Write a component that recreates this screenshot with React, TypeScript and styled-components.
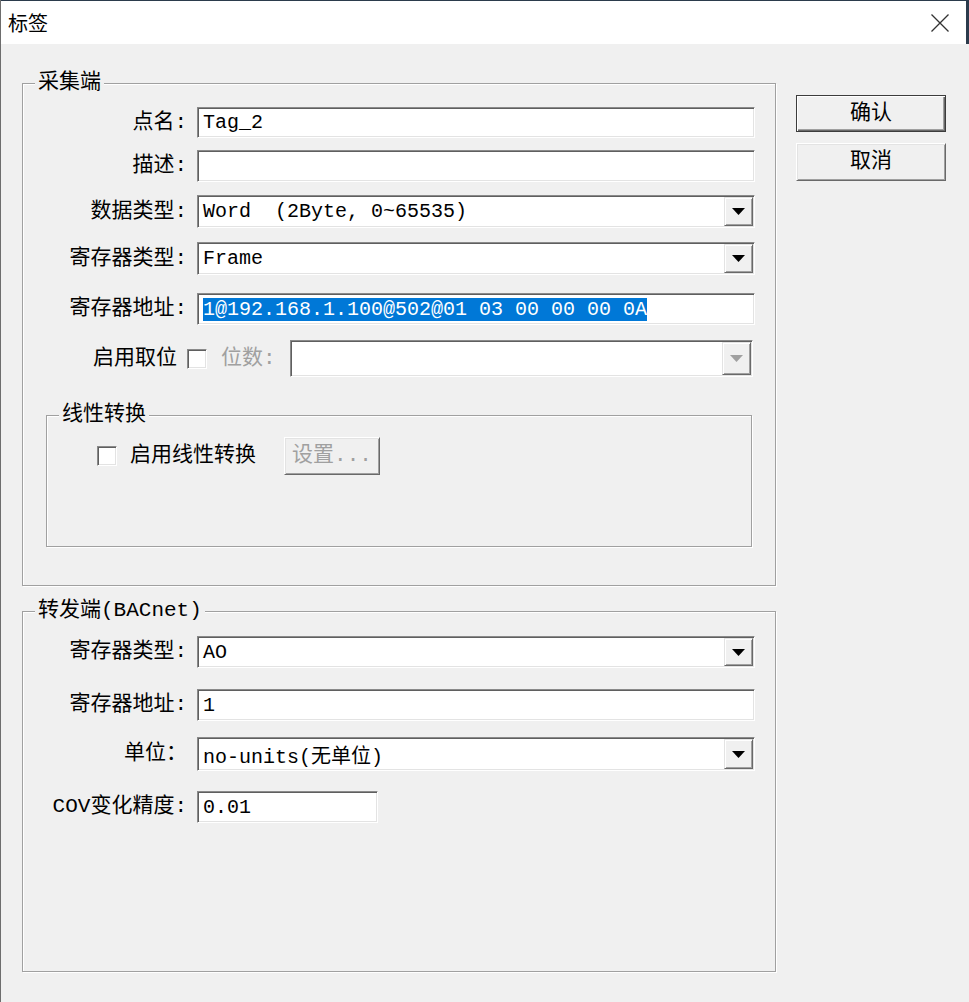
import React from "react";
import styled, { createGlobalStyle, css } from "styled-components";

const MONO = `"Liberation Mono", "Noto Sans CJK SC", monospace`;
const CJK = `"Noto Sans CJK SC", "Liberation Sans", sans-serif`;

const GlobalStyle = createGlobalStyle`
  html, body {
    margin: 0;
    padding: 0;
    background: #f0f0f0;
  }
`;

const Window = styled.div`
  width: 969px;
  height: 1002px;
  box-sizing: border-box;
  display: flex;
  flex-direction: column;
  background: #f0f0f0;
  border-left: 1px solid #6d6d6d;
  overflow: hidden;
  font-family: ${MONO};
  color: #000;
`;

const TitleBar = styled.div`
  height: 44px;
  flex-shrink: 0;
  box-sizing: border-box;
  display: flex;
  align-items: center;
  justify-content: space-between;
  background: #fff;
  border-top: 1px solid #2b3b4c;
  border-right: 3px solid #2b3b4c;
  padding: 0 17px 0 7px;
`;

const Title = styled.span`
  font-family: ${CJK};
  font-size: 20px;
  line-height: 24px;
`;

const Body = styled.div`
  flex: 1;
  display: flex;
  align-items: flex-start;
  padding: 28px 0 0 21px;
`;

const Column = styled.div`
  width: 754px;
  display: flex;
  flex-direction: column;
`;

const Group = styled.fieldset<{ $mt?: number; $pb: number; $mx?: number }>`
  margin: ${p => p.$mt ?? 0}px ${p => p.$mx ?? 0}px 0;
  padding: 0 0 ${p => p.$pb}px;
  border: 1px solid #a0a0a0;
  box-shadow: inset 1px 1px #fff, 1px 1px #fff;
  min-width: 0;
`;

const Legend = styled.legend`
  margin-left: 12px;
  padding: 0 3px;
  background: #f0f0f0;
  font-size: 21px;
  line-height: 22px;
  white-space: nowrap;
`;

const Row = styled.div<{ $mt: number }>`
  display: flex;
  align-items: center;
  margin-top: ${p => p.$mt}px;
  padding-right: 20px;
`;

const Label = styled.label<{ $w?: number }>`
  flex-shrink: 0;
  width: ${p => p.$w ?? 164}px;
  margin-right: 10px;
  text-align: right;
  font-size: 21px;
  line-height: 24px;
  white-space: nowrap;
`;

const sunken = css`
  box-sizing: border-box;
  border: 1px solid;
  border-color: #8a8a8a #fff #fff #8a8a8a;
  box-shadow: inset 1px 1px #5f5f5f, inset -1px -1px #e3e3e3;
  background: #fff;
`;

const TextBox = styled.div<{ $h: number; $w?: number }>`
  ${sunken}
  flex: ${p => (p.$w ? "0 0 auto" : "1")};
  width: ${p => (p.$w ? `${p.$w}px` : "auto")};
  height: ${p => p.$h}px;
  padding: 1px 4px 1px 5px;
  display: flex;
  align-items: center;
  font-size: 20px;
  white-space: pre;
  overflow: hidden;
`;

const Selected = styled.span`
  background: #0078d7;
  color: #fff;
  line-height: 23px;
`;

const Combo = styled.div<{ $h: number; $mr?: number }>`
  ${sunken}
  flex: 1;
  height: ${p => p.$h}px;
  margin-right: ${p => p.$mr ?? 0}px;
  padding: 1px;
  display: flex;
`;

const ComboText = styled.div`
  flex: 1;
  display: flex;
  align-items: center;
  padding-left: 4px;
  font-size: 20px;
  white-space: pre;
  overflow: hidden;
`;

const DropButton = styled.div`
  width: 29px;
  flex-shrink: 0;
  box-sizing: border-box;
  display: flex;
  align-items: center;
  justify-content: center;
  background: #f0f0f0;
  border: 1px solid;
  border-color: #e3e3e3 #696969 #696969 #e3e3e3;
  box-shadow: inset 1px 1px #fff, inset -1px -1px #a0a0a0;
`;

const Check = styled.span`
  ${sunken}
  display: inline-block;
  flex-shrink: 0;
  width: 20px;
  height: 20px;
`;

const Dim = styled.span`
  margin: 0 14px;
  color: #a0a0a0;
  font-size: 21px;
  line-height: 24px;
  white-space: nowrap;
`;

const CheckRow = styled.div`
  display: flex;
  align-items: center;
  margin-top: 11px;
  padding-left: 50px;
`;

const CheckLabel = styled.span`
  margin-left: 13px;
  font-size: 21px;
  line-height: 24px;
  white-space: nowrap;
`;

const PushButton = styled.button<{ $default?: boolean; $h: number; $w?: number; $mt?: number; $ml?: number }>`
  width: ${p => p.$w ?? 150}px;
  height: ${p => p.$h}px;
  margin: ${p => p.$mt ?? 0}px 0 0 ${p => p.$ml ?? 0}px;
  padding: 0;
  background: #f0f0f0;
  font-family: ${MONO};
  font-size: 21px;
  line-height: 24px;
  color: ${p => (p.disabled ? "#a0a0a0" : "#000")};
  border: 1px solid;
  border-color: ${p => (p.$default ? "#3c3c3c" : "#fff #696969 #696969 #fff")};
  box-shadow: ${p =>
    p.$default
      ? "inset 1px 1px #fff, inset -1px -1px #696969, inset -2px -2px #a0a0a0"
      : "inset 1px 1px #e3e3e3, inset -1px -1px #a0a0a0"};
  white-space: nowrap;
`;

const ButtonColumn = styled.div`
  display: flex;
  flex-direction: column;
  margin-left: 20px;
  padding-top: 23px;
`;

const Arrow = ({ color = "#000" }: { color?: string }) => (
  <svg width="13" height="7" viewBox="0 0 13 7">
    <polygon points="0,0 13,0 6.5,7" fill={color} />
  </svg>
);

const CloseIcon = () => (
  <svg width="18" height="18" viewBox="0 0 18 18">
    <path d="M0.5 0.5 L17.5 17.5 M17.5 0.5 L0.5 17.5" stroke="#333" strokeWidth="1.3" fill="none" />
  </svg>
);

const Select = ({ h, value, disabled, mr }: { h: number; value: string; disabled?: boolean; mr?: number }) => (
  <Combo $h={h} $mr={mr}>
    <ComboText>{value}</ComboText>
    <DropButton>
      <Arrow color={disabled ? "#a0a0a0" : "#000"} />
    </DropButton>
  </Combo>
);

export default function App() {
  return (
    <>
      <GlobalStyle />
      <Window>
        <TitleBar>
          <Title>标签</Title>
          <CloseIcon />
        </TitleBar>
        <Body>
          <Column>
            <Group $pb={38}>
              <Legend>采集端</Legend>
              <Row $mt={13}>
                <Label>点名:</Label>
                <TextBox $h={31}>Tag_2</TextBox>
              </Row>
              <Row $mt={12}>
                <Label>描述:</Label>
                <TextBox $h={32} />
              </Row>
              <Row $mt={13}>
                <Label>数据类型:</Label>
                <Select h={33} value="Word  (2Byte, 0~65535)" />
              </Row>
              <Row $mt={14}>
                <Label>寄存器类型:</Label>
                <Select h={33} value="Frame" />
              </Row>
              <Row $mt={18}>
                <Label>寄存器地址:</Label>
                <TextBox $h={32}>
                  <Selected>1@192.168.1.100@502@01 03 00 00 00 0A</Selected>
                </TextBox>
              </Row>
              <Row $mt={15}>
                <Label $w={154}>启用取位</Label>
                <Check />
                <Dim>位数:</Dim>
                <Select h={37} value="" disabled mr={2} />
              </Row>
              <Group $mt={27} $mx={23} $pb={71}>
                <Legend>线性转换</Legend>
                <CheckRow>
                  <Check />
                  <CheckLabel>启用线性转换</CheckLabel>
                  <PushButton $h={38} $w={96} $ml={28} disabled>
                    设置...
                  </PushButton>
                </CheckRow>
              </Group>
            </Group>
            <Group $mt={14} $pb={148}>
              <Legend>转发端(BACnet)</Legend>
              <Row $mt={14}>
                <Label>寄存器类型:</Label>
                <Select h={32} value="AO" />
              </Row>
              <Row $mt={21}>
                <Label>寄存器地址:</Label>
                <TextBox $h={32}>1</TextBox>
              </Row>
              <Row $mt={16}>
                <Label>单位：</Label>
                <Select h={34} value="no-units(无单位)" />
              </Row>
              <Row $mt={20}>
                <Label>COV变化精度:</Label>
                <TextBox $h={32} $w={181}>0.01</TextBox>
              </Row>
            </Group>
          </Column>
          <ButtonColumn>
            <PushButton $default $h={37}>确认</PushButton>
            <PushButton $h={38} $mt={11}>取消</PushButton>
          </ButtonColumn>
        </Body>
      </Window>
    </>
  );
}
